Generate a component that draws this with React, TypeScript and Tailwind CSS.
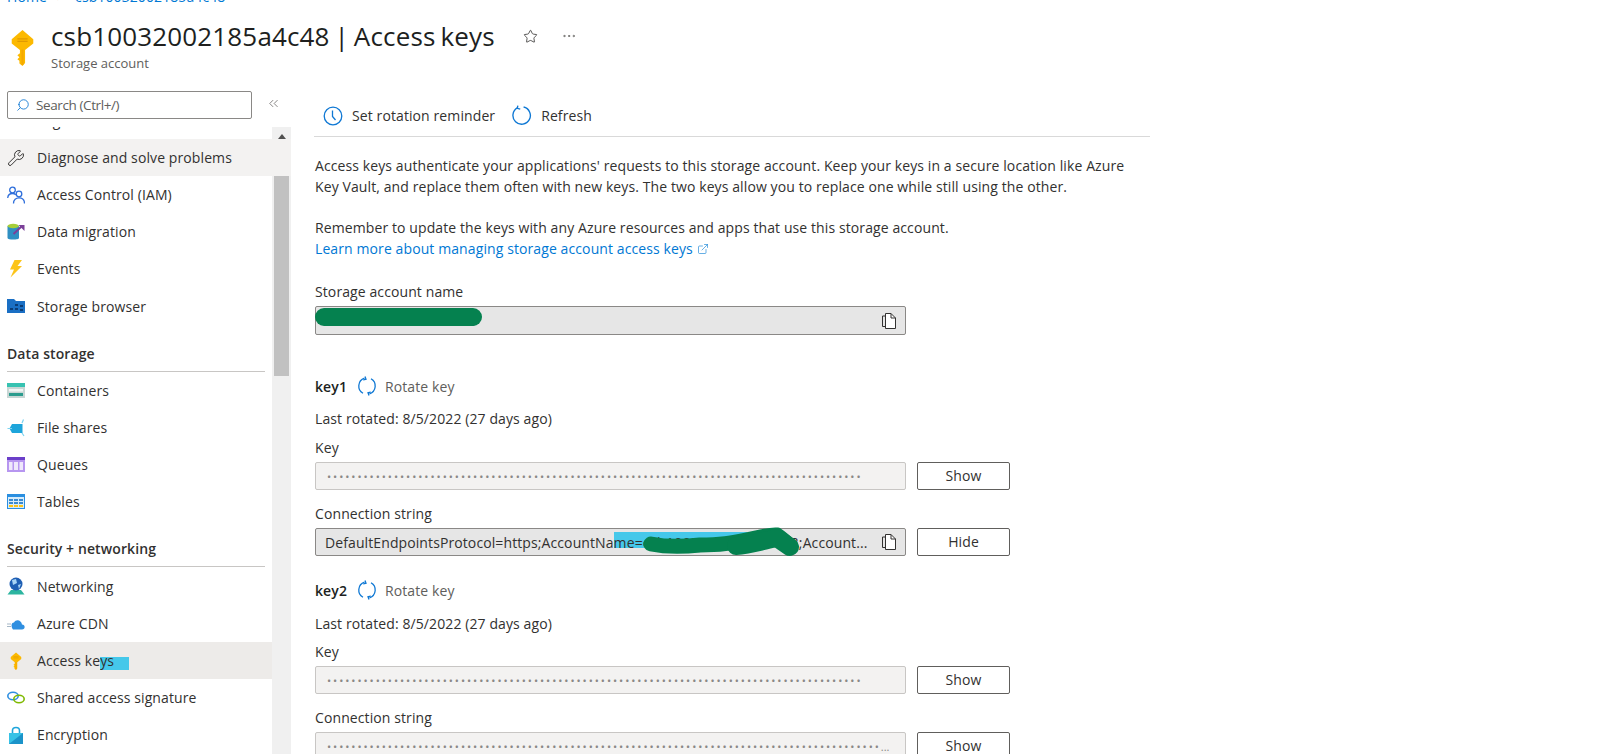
import { ReactNode } from 'react'
import { Star, Ellipsis, Wrench, Search, ChevronsLeft, ExternalLink } from 'lucide-react'

const KeyIcon = ({ className }: { className: string }) => (
  <svg viewBox="0 0 24 36" className={className}>
    <path d="M12 1 22.5 10 22.5 14 14.5 20.5V33L12 36 9 33.5V31L7 29.5 9 27.5 7 25.5 9.5 23.5V20.5L1.500 14V10Z" fill="#fcb900" />
    <path d="M7 9.500H17M7 12H17" stroke="#e09a00" strokeWidth="1.200" />
    <path d="M12 20V35" stroke="#f09a00" strokeWidth="2" opacity="0.5" />
  </svg>
)

const ClockIcon = () => (
  <svg viewBox="0 0 20 20" className="w-[20px] h-[20px]" fill="none" stroke="#0f78d4" strokeWidth="1.300">
    <circle cx="10" cy="10" r="8.800" />
    <path d="M9.500 4.500V10.500L12.500 14" />
  </svg>
)

const RefreshIcon = () => (
  <svg viewBox="0 0 20 20" className="w-[21px] h-[21px]" fill="none" stroke="#0f78d4" strokeWidth="1.300">
    <path d="M6 2.800A8.300 8.300 0 1 0 12 1.900" />
    <path d="M6.500 0.500 6 3.200 8.800 4" />
  </svg>
)

const RotateIcon = () => (
  <svg viewBox="0 0 20 20" className="w-[20px] h-[20px]" fill="none" stroke="#0f78d4" strokeWidth="1.300">
    <path d="M7.500 2.200A8.300 8.300 0 0 0 6 17.300" />
    <path d="M12.500 17.800A8.300 8.300 0 0 0 14 2.700" />
    <path d="M8 0.500 9 3.200 6.200 4M12 19.500 11 16.800 13.800 16" />
  </svg>
)

const CopyIcon = () => (
  <svg viewBox="0 0 16 18" className="w-[16px] h-[18px]" fill="none" stroke="#323130" strokeWidth="1">
    <path d="M4.500 4V1.500H10L14.500 6V16.500H4.500Z" fill="#fff" />
    <path d="M4.500 4H1.500V14.500H4.500" />
    <path d="M10 1.500V6H14.500" />
  </svg>
)

const UsersIcon = () => (
  <svg viewBox="0 0 18 18" className="w-[18px] h-[18px]" fill="none" stroke="#2f6fdb" strokeWidth="1.300">
    <circle cx="5.500" cy="4" r="2.800" />
    <path d="M0.700 12C1 8.500 3 7.500 5.500 7.500 7 7.500 8 8 8.800 8.800" />
    <circle cx="12" cy="8" r="2.800" />
    <path d="M6.500 17.500C6.500 13.500 9 11.800 12 11.800 15 11.800 17.500 13.500 17.500 17.500" />
  </svg>
)

const MigrationIcon = () => (
  <svg viewBox="0 0 18 18" className="w-[18px] h-[18px]">
    <path d="M0.500 3V15C0.500 17 12 17 12 15V3Z" fill="#2f8fc2" />
    <ellipse cx="6.200" cy="3" rx="5.700" ry="2.200" fill="#a6ce39" />
    <path d="M6.500 11 15 3" stroke="#7b3f98" strokeWidth="2" />
    <path d="M11.500 2H17.500V8Z" fill="#7b3f98" />
  </svg>
)

const BoltIcon = () => (
  <svg viewBox="0 0 18 18" className="w-[18px] h-[18px]">
    <path d="M7.500 0H15L10.500 6H15L3.500 17.500 7 9.500H3Z" fill="#fcc419" />
  </svg>
)

const FolderIcon = () => (
  <svg viewBox="0 0 18 16" className="w-[18px] h-[16px]">
    <path d="M0 1H7L9 3H18V15H0Z" fill="#1a6fc4" />
    <path d="M3 10H6V12H3ZM8 10H11V12H8ZM13 7H16V9H13ZM13 11H16V13H13ZM8 6H11V8H8Z" fill="#0b3c75" />
  </svg>
)

const ContainersIcon = () => (
  <svg viewBox="0 0 18 15" className="w-[18px] h-[15px]">
    <rect width="18" height="15" fill="#c8d6d4" />
    <rect width="18" height="4" fill="#37c2b1" />
    <rect x="2" y="6" width="14" height="2.500" fill="#f1f5f4" />
    <rect x="2" y="10" width="14" height="3" fill="#2b9c8e" />
  </svg>
)

const FileSharesIcon = () => (
  <svg viewBox="0 0 18 18" className="w-[18px] h-[18px]">
    <path d="M5 5H15.500V14H5L2.500 9.500Z" fill="#1ea5db" />
    <path d="M0.500 9.500H5M15 4 16.500 0.500M15 14 17 17" stroke="#7cd3f0" strokeWidth="1.200" />
  </svg>
)

const QueuesIcon = () => (
  <svg viewBox="0 0 18 15" className="w-[18px] h-[15px]">
    <rect width="18" height="15" fill="#b796f0" />
    <rect width="18" height="3" fill="#6b3fc9" />
    <path d="M2 5H5.500V13H2ZM7 5H11V13H7ZM12.500 5H16V13H12.500Z" fill="#efe8fb" />
  </svg>
)

const TablesIcon = () => (
  <svg viewBox="0 0 18 15" className="w-[18px] h-[15px]">
    <rect width="18" height="15" fill="#2a8fe0" />
    <rect y="3" x="1" width="16" height="11" fill="#d6ecfb" />
    <path d="M2 5H6V7H2ZM7 5H11V7H7ZM12 5H16V7H12ZM2 8H6V10H2ZM7 8H11V10H7ZM12 8H16V10H12Z" fill="#3b8bd0" />
    <path d="M2 11H6V13H2ZM7 11H11V13H7ZM12 11H16V13H12Z" fill="#fcc419" />
  </svg>
)

const GlobeIcon = () => (
  <svg viewBox="0 0 18 18" className="w-[18px] h-[18px]">
    <path d="M0.500 17.500 4 13H14L17.500 17.500Z" fill="#2cb5a0" />
    <circle cx="9" cy="7" r="6.500" fill="#1f5fb4" />
    <path d="M5 3 9 2 10 6 6 8ZM11 8 14 7 12 12Z" fill="#a8d4f5" />
  </svg>
)

const CloudIcon = () => (
  <svg viewBox="0 0 18 12" className="w-[18px] h-[12px]">
    <path d="M6 11.500H15C18.500 11.500 18.500 6.500 15 6.500 14.500 2 9 0.500 7 4.500 4.500 4.500 3.500 8 6 11.500Z" fill="#2f8fe0" />
    <path d="M0 6H4M0 8.500H4" stroke="#a6b7c6" strokeWidth="1" />
  </svg>
)

const LinkIcon = () => (
  <svg viewBox="0 0 18 13" className="w-[18px] h-[13px]" fill="none" strokeWidth="1.600">
    <ellipse cx="6" cy="5" rx="5.200" ry="3.800" stroke="#2f8fe0" />
    <ellipse cx="12" cy="8" rx="5.200" ry="3.800" stroke="#7fb900" />
  </svg>
)

const LockIcon = () => (
  <svg viewBox="0 0 14 18" className="w-[14px] h-[18px] ml-[2px]">
    <path d="M3.500 8V4.500C3.500 0.500 10.500 0.500 10.500 4.500V8" fill="none" stroke="#1ea5db" strokeWidth="1.600" />
    <rect y="7" width="14" height="11" fill="#37c2e6" />
    <path d="M0 18 14 7V18Z" fill="#1b93c9" />
  </svg>
)

const NavRow = ({ icon, label, active, hover, children }: { icon?: ReactNode; label: string; active?: boolean; hover?: boolean; children?: ReactNode }) => (
  <div className={`relative flex items-center h-[37.1px] text-[14px] text-[#323130] ${active ? 'bg-[#edebe9]' : ''} ${hover ? 'bg-[#f3f2f1]' : ''}`}>
    <span className="w-[37px] pl-[7px] flex justify-start">{icon}</span>
    {children}
    <span className="relative">{label}</span>
  </div>
)

const Section = ({ title }: { title: string }) => (
  <div className="mt-[19px] mb-[0.5px] mx-[7px] h-[28px] border-b border-[#c8c6c4] text-[14px] font-semibold text-[#323130] leading-[19px]">{title}</div>
)

const Field = ({ label, children, button, mt }: { label: string; children: ReactNode; button: string; mt: string }) => (
  <div className={mt}>
    <div className="h-[19px] leading-[19px] text-[14px] text-[#323130]">{label}</div>
    <div className="mt-[5px] flex gap-[11px]">
      {children}
      <button className="w-[93px] h-[28px] shrink-0 pb-[2px] border border-[#605e5c] rounded-[2px] bg-white text-[14px] font-medium text-[#323130]">{button}</button>
    </div>
  </div>
)

const Dots = ({ count, ellipsis }: { count: number; ellipsis?: boolean }) => (
  <div className="w-[591px] h-[28px] shrink-0 bg-[#f3f2f1] border border-[#c8c6c4] rounded-[2px] pl-[11px] flex items-center overflow-hidden text-[11px] tracking-[1.950px] text-[#8a8886] whitespace-nowrap">
    {'•'.repeat(count)}{ellipsis ? <span className="tracking-[0px]">...</span> : null}
  </div>
)

const KeyHeader = ({ name, mt, gap }: { name: string; mt: string; gap: string }) => (
  <div className={mt}>
    <div className="flex items-center h-[20px] text-[14px]">
      <span className="font-semibold text-[#201f1e] w-[42px]">{name}</span>
      <span className="w-[28px] flex"><RotateIcon /></span>
      <span className="text-[#605e5c]">Rotate key</span>
    </div>
    <div className={`${gap} h-[19px] leading-[19px] text-[14px] text-[#323130]`}>Last rotated: 8/5/2022 (27 days ago)</div>
  </div>
)

export default function App() {
  return (
    <div className="w-[1600px] h-[754px] overflow-hidden bg-white font-['Open_Sans','Noto_Sans',sans-serif] tracking-[0.100px]">
      <div className="h-[6px] overflow-hidden pl-[7px] flex items-end text-[14px] leading-[19px] text-[#0078d4]">
        <div className="flex gap-[10px] shrink-0"><span>Home</span><span className="text-[#605e5c]">&gt;</span><span>csb10032002185a4c48</span></div>
      </div>

      <div className="h-[82px] flex pl-[10px] pt-[20px]">
        <KeyIcon className="w-[25px] h-[37px] mt-[3px]" />
        <div className="ml-[16px]">
          <div className="flex items-center h-[20px] text-[26px] leading-[20px] tracking-[0.150px] [word-spacing:-2px] text-[#201f1e]">
            <span>csb10032002185a4c48 | Access keys</span>
            <Star className="ml-[28px] w-[15px] h-[15px] text-[#323130]" strokeWidth={1.3} />
            <Ellipsis className="ml-[23px] w-[16px] h-[16px] text-[#605e5c]" strokeWidth={1.2} />
          </div>
          <div className="mt-[9px] text-[13px] leading-[16px] tracking-[0px] text-[#605e5c]">Storage account</div>
        </div>
      </div>

      <div className="flex">
        <div className="w-[291px] shrink-0">
          <div className="h-[39px] flex items-start pt-[3px] pl-[7px]">
            <div className="w-[245px] h-[28px] border border-[#8a8886] rounded-[2px] flex items-center pl-[8px] text-[13.500px] tracking-[-0.400px] text-[#605e5c]">
              <Search className="w-[14px] h-[14px] text-[#0f78d4] -scale-x-100 mr-[6px]" strokeWidth={1.5} />
              Search (Ctrl+/)
            </div>
            <ChevronsLeft className="ml-[14px] mt-[5px] w-[15px] h-[15px] text-[#605e5c]" strokeWidth={1.2} />
          </div>

          <div className="flex h-[627px] overflow-hidden">
            <div className="w-[272px] shrink-0 overflow-hidden">
              <div className="-mt-[25px]">
                <NavRow label="Tags" />
                <div className="w-[291px]">
                  <NavRow hover label="Diagnose and solve problems" icon={<Wrench className="w-[18px] h-[18px] text-[#323130]" strokeWidth={1.3} />} />
                </div>
                <NavRow label="Access Control (IAM)" icon={<UsersIcon />} />
                <NavRow label="Data migration" icon={<MigrationIcon />} />
                <NavRow label="Events" icon={<BoltIcon />} />
                <NavRow label="Storage browser" icon={<FolderIcon />} />
                <Section title="Data storage" />
                <NavRow label="Containers" icon={<ContainersIcon />} />
                <NavRow label="File shares" icon={<FileSharesIcon />} />
                <NavRow label="Queues" icon={<QueuesIcon />} />
                <NavRow label="Tables" icon={<TablesIcon />} />
                <Section title="Security + networking" />
                <NavRow label="Networking" icon={<GlobeIcon />} />
                <NavRow label="Azure CDN" icon={<CloudIcon />} />
                <NavRow active label="Access keys" icon={<KeyIcon className="w-[12px] h-[18px] ml-[3px]" />}>
                  <span className="absolute left-[100px] top-[15px] w-[29px] h-[13px] bg-[#45c8ea]" />
                </NavRow>
                <NavRow label="Shared access signature" icon={<LinkIcon />} />
                <NavRow label="Encryption" icon={<LockIcon />} />
              </div>
            </div>
            <div className="w-[19px] shrink-0 bg-[#f0f0f0] flex flex-col items-center">
              <div className="h-[12px] shrink-0 w-full flex justify-center items-end">
                <span className="w-0 h-0 border-x-[4px] border-x-transparent border-b-[5px] border-b-[#505050]" />
              </div>
              <div className="h-[37px] shrink-0 w-full bg-[#f3f2f1]" />
              <div className="w-[15px] h-[200px] bg-[#c1c1c1]" />
            </div>
          </div>
        </div>

        <div className="ml-[23px] w-[836px] shrink-0">
          <div className="h-[49px] flex items-center border-b border-[#d9d9d9] text-[14px] text-[#323130] pl-[9px] pt-[7px]">
            <ClockIcon />
            <span className="ml-[9px]">Set rotation reminder</span>
            <span className="ml-[16px] flex"><RefreshIcon /></span>
            <span className="ml-[9px]">Refresh</span>
          </div>
          <div className="pl-[1px] text-[14px] leading-[21px] text-[#323130]">
            <p className="mt-[18px]">Access keys authenticate your applications' requests to this storage account. Keep your keys in a secure location like Azure<br />Key Vault, and replace them often with new keys. The two keys allow you to replace one while still using the other.</p>
            <p className="mt-[20px]">Remember to update the keys with any Azure resources and apps that use this storage account.<br /><span className="text-[#0078d4]">Learn more about managing storage account access keys <ExternalLink className="inline w-[12px] h-[12px] mb-[2px]" strokeWidth={1.2} /></span></p>

            <div className="mt-[23px] h-[19px] leading-[19px]">Storage account name</div>
            <div className="relative mt-[5px] w-[591px] h-[29px] bg-[#e6e6e6] border border-[#8a8886] rounded-[2px] flex items-center justify-between pl-[10px] pr-[8px]">
              <span className="text-[#605e5c]">csb10032002185a4c48</span>
              <span className="absolute -left-[1px] top-[1px] w-[167px] h-[18px] rounded-full bg-[#05814f]" />
              <CopyIcon />
            </div>

            <KeyHeader name="key1" mt="mt-[41px]" gap="mt-[13px]" />
            <Field label="Key" button="Show" mt="mt-[10px]"><Dots count={88} /></Field>
            <Field label="Connection string" button="Hide" mt="mt-[14px]">
              <div className="relative w-[591px] h-[28px] shrink-0 bg-[#e6e6e6] border border-[#8a8886] rounded-[2px] flex items-center pl-[9px] pr-[38px]">
                <span className="absolute left-[298px] top-[3px] w-[133px] h-[16px] bg-[#45c8ea]" />
                <span className="relative whitespace-nowrap">DefaultEndpointsProtocol=https;AccountName=<span className="tracking-[0.400px]">csb10032002185a4c48</span>;Account...</span>
                <svg viewBox="0 0 170 32" className="absolute left-[320px] -top-[2px] w-[170px] h-[32px]">
                  <path d="M15 17C35 21 55 19 64 18 85 18 95 16 110 13 125 10 135 7 141 8 146 12 150 15 154 19" fill="none" stroke="#05814f" strokeWidth="15" strokeLinecap="round" strokeLinejoin="round" />
                  <path d="M100 19C115 18 130 13 141 11L154 20" fill="none" stroke="#05814f" strokeWidth="18" strokeLinecap="round" strokeLinejoin="round" />
                </svg>
                <span className="absolute right-[8px] top-[4px]"><CopyIcon /></span>
              </div>
            </Field>

            <KeyHeader name="key2" mt="mt-[24px]" gap="mt-[14px]" />
            <Field label="Key" button="Show" mt="mt-[9px]"><Dots count={88} /></Field>
            <Field label="Connection string" button="Show" mt="mt-[14px]"><Dots count={91} ellipsis /></Field>
          </div>
        </div>
      </div>
    </div>
  )
}
